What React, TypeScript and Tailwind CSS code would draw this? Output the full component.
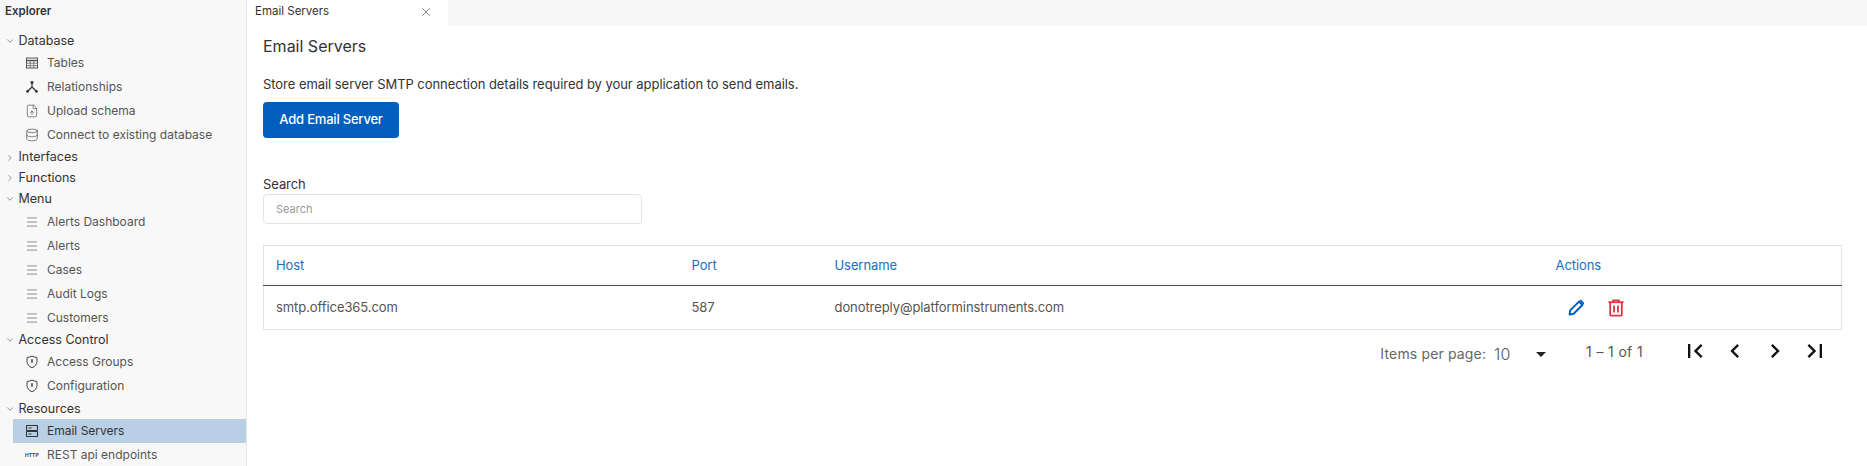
import { ChevronDown, ChevronRight, Database, FileUp, Menu, X } from 'lucide-react';
import { MdArrowDropDown, MdChevronLeft, MdChevronRight, MdFirstPage, MdLastPage } from 'react-icons/md';
import type { ReactNode } from 'react';

const TableIcon = () => (
  <svg width="14" height="14" viewBox="0 0 14 14" fill="none" stroke="#555" strokeWidth="1">
    <rect x="1.5" y="2" width="11" height="10" />
    <path d="M1.5 4.5h11" strokeWidth="1.4" />
    <path d="M1.5 7.2h11M1.5 9.6h11M5.2 4.5V12M8.8 4.5V12" strokeWidth="0.7" />
  </svg>
);

const RelationshipsIcon = () => (
  <svg width="14" height="14" viewBox="0 0 14 14" fill="none" stroke="#333" strokeWidth="1.2">
    <path d="M7 3v4M7 7l-4 4M7 7l4 4" />
    <circle cx="7" cy="2.6" r="1.5" fill="#333" stroke="none" />
    <circle cx="2.6" cy="11.4" r="1.4" fill="#333" stroke="none" />
    <circle cx="11.4" cy="11.4" r="1.4" fill="#333" stroke="none" />
  </svg>
);

const ShieldIcon = () => (
  <svg width="14" height="14" viewBox="0 0 14 14" fill="none" stroke="#444" strokeWidth="1">
    <path d="M7 1.2l5 1.6v3.6c0 3.2-2.2 5.2-5 6.4-2.8-1.2-5-3.2-5-6.4V2.8z" />
    <path d="M7 4.2v3.6" strokeWidth="1.6" />
  </svg>
);

const ServerIcon = () => (
  <svg width="14" height="14" viewBox="0 0 14 14" fill="none" stroke="#333" strokeWidth="1.1">
    <rect x="1.5" y="1.5" width="11" height="5" rx="0.5" />
    <rect x="1.5" y="7.5" width="11" height="5" rx="0.5" />
    <path d="M3.5 4h3M3.5 10h3" />
  </svg>
);

const PenIcon = () => (
  <svg width="17" height="17" viewBox="0 0 17 17" fill="none">
    <path d="M2.2 11.4L11 2.6l3.4 3.4-8.8 8.8-4 0.8z" stroke="#005ebd" strokeWidth="2" strokeLinejoin="round" />
    <path d="M11.2 1.6l1-0.6a1.2 1.2 0 011.4 0.2l2.2 2.2a1.2 1.2 0 01.2 1.4l-.6 1-4.2-4.2z" fill="#005ebd" />
  </svg>
);

const BinIcon = () => (
  <svg width="16" height="18" viewBox="0 0 16 18" fill="none" stroke="#dc3545">
    <path d="M0.5 3.2h15" strokeWidth="1.8" />
    <path d="M5 3V1.2h6V3" strokeWidth="1.5" />
    <path d="M2.2 3.5v12.2a1 1 0 001 1h9.6a1 1 0 001-1V3.5" strokeWidth="1.8" />
    <path d="M6 6.5v7M10 6.5v7" strokeWidth="1.8" />
  </svg>
);

function Group({ label, open }: { label: string; open?: boolean }) {
  return (
    <div className="flex h-[20.8px] items-center pl-[5px] text-[12.5px] text-[#333]">
      {open ? <ChevronDown size={10} strokeWidth={1.5} className="text-[#555]" /> : <ChevronRight size={10} strokeWidth={1.5} className="text-[#555]" />}
      <span className="ml-[3.5px]">{label}</span>
    </div>
  );
}

function Item({ icon, label, active }: { icon: ReactNode; label: string; active?: boolean }) {
  return (
    <div className={`ml-[13px] flex h-[24px] items-center pl-[12px] text-[12px] ${active ? 'bg-[#b8cfe6] text-[#333]' : 'text-[#555]'}`}>
      <span className="flex w-[22px] shrink-0 items-center">{icon}</span>
      <span>{label}</span>
    </div>
  );
}

const menuIcon = <Menu size={14} strokeWidth={1} className="text-[#444]" />;

function Sidebar() {
  return (
    <aside className="h-[466px] w-[247px] shrink-0 overflow-hidden border-r border-[#e8e8e8] bg-[#f8f8f8]">
      <div className="flex h-[30.5px] items-start pl-[5px] pt-[3px] text-[11.5px] font-semibold text-[#333]">Explorer</div>
      <Group label="Database" open />
      <Item icon={<TableIcon />} label="Tables" />
      <Item icon={<RelationshipsIcon />} label="Relationships" />
      <Item icon={<FileUp size={14} strokeWidth={1} className="text-[#333]" />} label="Upload schema" />
      <Item icon={<Database size={14} strokeWidth={1} className="text-[#333]" />} label="Connect to existing database" />
      <Group label="Interfaces" />
      <Group label="Functions" />
      <Group label="Menu" open />
      <Item icon={menuIcon} label="Alerts Dashboard" />
      <Item icon={menuIcon} label="Alerts" />
      <Item icon={menuIcon} label="Cases" />
      <Item icon={menuIcon} label="Audit Logs" />
      <Item icon={menuIcon} label="Customers" />
      <Group label="Access Control" open />
      <Item icon={<ShieldIcon />} label="Access Groups" />
      <Item icon={<ShieldIcon />} label="Configuration" />
      <Group label="Resources" open />
      <Item icon={<ServerIcon />} label="Email Servers" active />
      <Item icon={<span className="text-[5px] font-bold leading-none text-[#444]">HTTP</span>} label="REST api endpoints" />
    </aside>
  );
}

export default function App() {
  return (
    <div className="flex h-[466px] w-[1867px] overflow-hidden bg-white font-['Inter',sans-serif]">
      <Sidebar />
      <main className="flex-1">
        <div className="flex h-[26px] bg-[#f7f7f7]">
          <div className="flex w-[201px] items-start justify-between bg-white pl-[8px] pr-[15px] pt-[3px] text-[11.5px] text-[#333]">
            <span>Email Servers</span>
            <X size={14} strokeWidth={1} className="mt-[2px] text-[#333]" />
          </div>
        </div>
        <div className="pl-[16px] pr-[25px]">
          <h1 className="mt-[9px] text-[16px] font-normal leading-[22px] text-[#333]">Email Servers</h1>
          <p className="mt-[17px] text-[13px] leading-[20px] tracking-[-0.05px] text-[#333]">Store email server SMTP connection details required by your application to send emails.</p>
          <button className="mt-[8px] h-[36px] w-[136px] rounded-[4px] bg-[#005ebd] text-[13px] font-medium tracking-[-0.2px] text-white">Add Email Server</button>
          <label className="mt-[36px] block text-[13px] leading-[20px] tracking-[-0.08px] text-[#333]">Search</label>
          <div className="flex h-[30px] w-[379px] items-center rounded-[4px] border border-[#e3e3e3] px-[12px] text-[11px] text-[#999]">Search</div>
          <table className="mt-[21px] w-[1579px] table-fixed border border-[#e3e3e3] text-left text-[13px] tracking-[-0.08px]">
            <thead>
              <tr className="h-[40px] border-b border-[#005ebd] text-[#1a6ec2]">
                <th className="w-[416px] pl-[12px] font-normal">Host</th>
                <th className="w-[143px] pl-[12px] font-normal">Port</th>
                <th className="w-[720px] pl-[12px] font-normal">Username</th>
                <th className="pl-[13px] font-normal">Actions</th>
              </tr>
            </thead>
            <tbody>
              <tr className="h-[44px] text-[#555]">
                <td className="pl-[12px]">smtp.office365.com</td>
                <td className="pl-[12px]">587</td>
                <td className="pl-[12px]">donotreply@platforminstruments.com</td>
                <td className="pl-[12px]">
                  <div className="flex items-center gap-[23px] pl-[13px]">
                    <PenIcon />
                    <BinIcon />
                  </div>
                </td>
              </tr>
            </tbody>
          </table>
          <div className="flex h-[45px] w-[1579px] items-center justify-end pr-[13px] text-[#555]">
            <span className="mt-[2px] text-[14px] tracking-[0.15px] text-[#666]">Items per page:</span>
            <span className="ml-[8px] mt-[2px] w-[35px] text-[16px] font-light">10</span>
            <MdArrowDropDown size={24} className="mt-[2px] text-[#222]" />
            <span className="mb-[3px] ml-[33px] text-[14px] tracking-[0.35px]">1 – 1 of 1</span>
            <div className="mb-[3px] ml-[38px] flex items-center gap-[12px] text-[#111]">
              <MdFirstPage size={28} />
              <MdChevronLeft size={28} />
              <MdChevronRight size={28} />
              <MdLastPage size={28} />
            </div>
          </div>
        </div>
      </main>
    </div>
  );
}
